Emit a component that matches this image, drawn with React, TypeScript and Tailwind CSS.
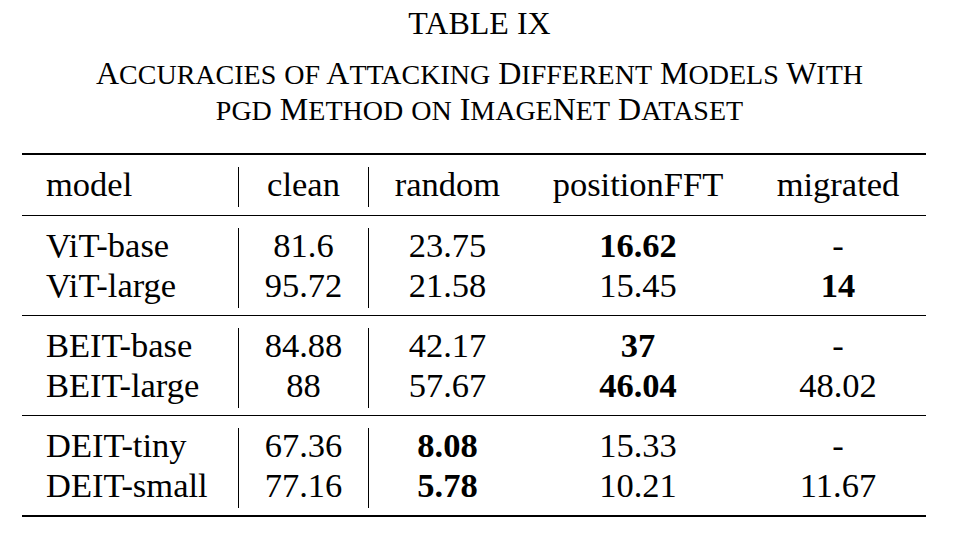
const serif = { fontFamily: '"Liberation Serif", "Times New Roman", serif' };

type Cell = { v: string; b?: boolean };

const groups: Cell[][][] = [
  [
    [{ v: "ViT-base" }, { v: "81.6" }, { v: "23.75" }, { v: "16.62", b: true }, { v: "-" }],
    [{ v: "ViT-large" }, { v: "95.72" }, { v: "21.58" }, { v: "15.45" }, { v: "14", b: true }],
  ],
  [
    [{ v: "BEIT-base" }, { v: "84.88" }, { v: "42.17" }, { v: "37", b: true }, { v: "-" }],
    [{ v: "BEIT-large" }, { v: "88" }, { v: "57.67" }, { v: "46.04", b: true }, { v: "48.02" }],
  ],
  [
    [{ v: "DEIT-tiny" }, { v: "67.36" }, { v: "8.08", b: true }, { v: "15.33" }, { v: "-" }],
    [{ v: "DEIT-small" }, { v: "77.16" }, { v: "5.78", b: true }, { v: "10.21" }, { v: "11.67" }],
  ],
];

const header = ["model", "clean", "random", "positionFFT", "migrated"];

// LaTeX-style small caps: capitals stay full size, lowercase becomes smaller capitals
function SmallCaps({ text }: { text: string }) {
  const runs: { s: string; small: boolean }[] = [];
  for (const ch of text) {
    const small = ch !== ch.toUpperCase();
    const last = runs[runs.length - 1];
    if (last && last.small === small) last.s += ch;
    else runs.push({ s: ch, small });
  }
  return (
    <>
      {runs.map((r, i) =>
        r.small ? (
          <span key={i} className="uppercase text-[28px] leading-none">
            {r.s}
          </span>
        ) : (
          <span key={i}>{r.s}</span>
        )
      )}
    </>
  );
}

function Row({ cells }: { cells: Cell[] }) {
  return (
    <div className="grid grid-cols-[216px_130px_158px_224px_176px] h-[40px] leading-[34px]">
      {cells.map((c, i) => (
        <div
          key={i}
          className={
            (i === 0 ? "pl-6 text-left " : "text-center ") +
            (i === 1 || i === 2 ? "border-l border-black " : "") +
            (c.b ? "font-bold" : "")
          }
        >
          {c.v}
        </div>
      ))}
    </div>
  );
}

export default function App() {
  return (
    <div className="w-[959px] h-[537px] bg-white text-black overflow-hidden" style={serif}>
      {/* caption */}
      <div className="text-center pt-[4px] text-[32px]">
        <div className="leading-[38px]">TABLE IX</div>
        <div className="leading-[36px] mt-[13px]">
          <SmallCaps text="Accuracies of Attacking Different Models With" />
          <br />
          <SmallCaps text="pgd Method on ImageNet Dataset" />
        </div>
      </div>

      {/* table */}
      <div className="ml-[22px] w-[904px] mt-[26px] text-[34.5px]">
        <div className="border-t-2 border-black" />
        <div className="pt-[12px] pb-[8px]">
          <Row cells={header.map((h) => ({ v: h }))} />
        </div>
        <div className="border-t-[1.5px] border-black" />
        {groups.map((g, gi) => (
          <div key={gi}>
            <div className="pt-[12px] pb-[7px]">
              {g.map((r, ri) => (
                <Row key={ri} cells={r} />
              ))}
            </div>
            <div className={gi === groups.length - 1 ? "border-t-2 border-black" : "border-t-[1.5px] border-black"} />
          </div>
        ))}
      </div>
    </div>
  );
}
